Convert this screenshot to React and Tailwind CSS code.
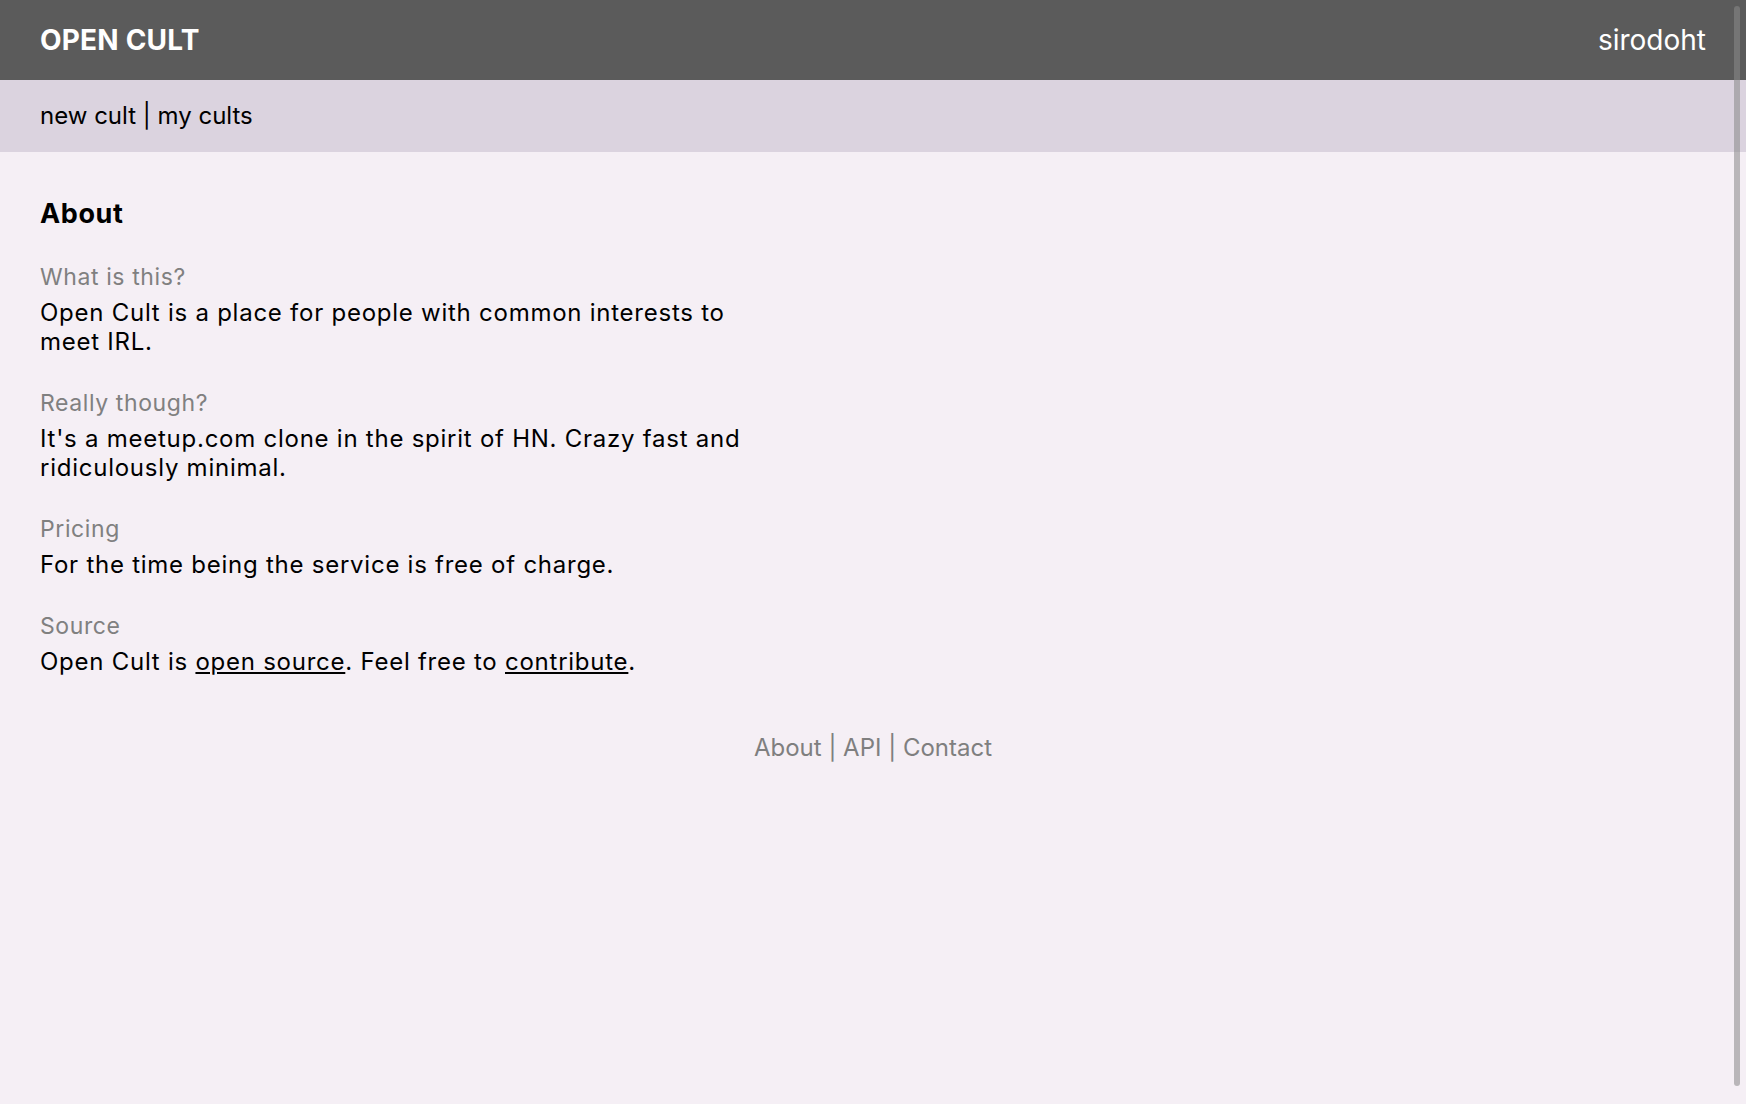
import React from "react";

const font = { fontFamily: "Inter, 'Noto Sans', 'Liberation Sans', sans-serif" };

function Section({ label, children }) {
  return (
    <div className="mt-[33px]">
      <div className="text-[23px] leading-[28px] tracking-[0.6px] text-[#808080]">{label}</div>
      <div className="mt-[7px] text-[24px] leading-[29px] tracking-[0.75px] text-black">{children}</div>
    </div>
  );
}

export default function App() {
  return (
    <div className="relative min-h-screen bg-[#f5eff5]" style={font}>
      <header className="h-[80px] bg-[#5b5b5b] px-[40px] flex items-center justify-between text-white">
        <div className="text-[28px] font-bold tracking-[0.2px]">OPEN CULT</div>
        <div className="text-[28px]">sirodoht</div>
      </header>
      <nav className="h-[72px] bg-[#dbd3df] px-[40px] flex items-center text-[24px] text-black whitespace-pre">
        new cult | my cults
      </nav>
      <main className="px-[40px] pt-[46px]">
        <div className="max-w-[720px]">
          <h1 className="text-[27px] leading-[32px] font-bold tracking-[0.6px] text-black">About</h1>
          <Section label="What is this?">
            Open Cult is a place for people with common interests to meet IRL.
          </Section>
          <Section label="Really though?">
            It's a meetup.com clone in the spirit of HN. Crazy fast and ridiculously minimal.
          </Section>
          <Section label="Pricing">For the time being the service is free of charge.</Section>
          <Section label="Source">
            Open Cult is <a href="#" className="underline">open source</a>. Feel free to{" "}
            <a href="#" className="underline">contribute</a>.
          </Section>
        </div>
        <footer className="mt-[57px] text-center text-[24px] leading-[29px] text-[#7f7f7f] whitespace-pre">
          <a href="#">About</a> | <a href="#">API</a> | <a href="#">Contact</a>
        </footer>
      </main>
      <div className="absolute right-[6px] top-[6px] h-[1080px] w-[6px] rounded-full bg-[rgba(137,137,137,0.56)]" />
    </div>
  );
}
